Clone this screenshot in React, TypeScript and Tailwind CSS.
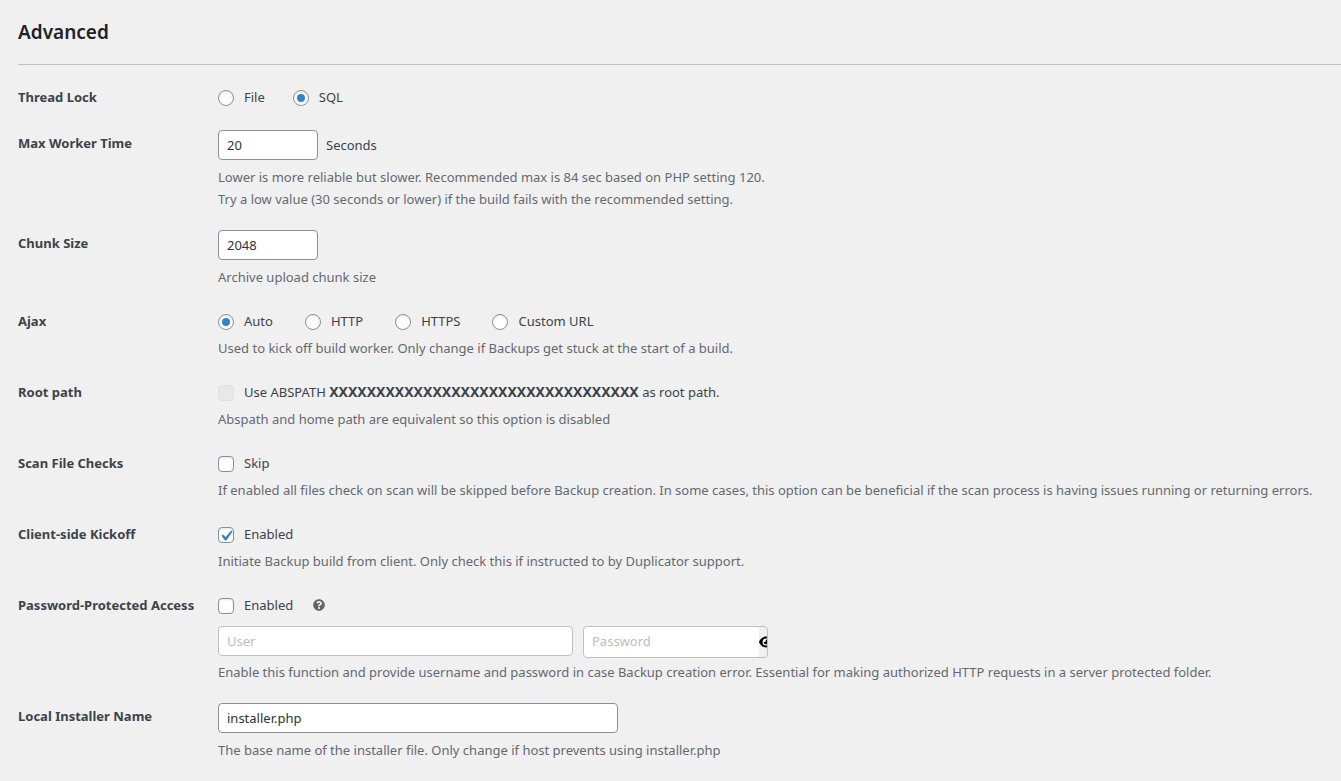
import React, { useState } from "react";
import { FaQuestionCircle } from "react-icons/fa";
import { FaEye } from "react-icons/fa6";

const inputClass =
  "h-[30px] rounded border border-[#8c8f94] bg-white px-2 text-[#2c3338] outline-none";

const labelClass = "w-[200px] shrink-0 font-bold leading-[26px]";

const Row = ({
  label,
  htmlFor,
  children,
}: {
  label: string;
  htmlFor?: string;
  children: React.ReactNode;
}) => (
  <div className="flex">
    {htmlFor ? (
      <label htmlFor={htmlFor} className={labelClass}>
        {label}
      </label>
    ) : (
      <span className={labelClass}>{label}</span>
    )}
    <div className="min-w-0 flex-1">{children}</div>
  </div>
);

const Description = ({ children }: { children: React.ReactNode }) => (
  <p className="pt-[3px] leading-[22px] text-[#646970]">{children}</p>
);

const Radio = ({
  name,
  label,
  checked,
  onChange,
}: {
  name: string;
  label: string;
  checked: boolean;
  onChange: () => void;
}) => (
  <label className="flex items-center gap-2.5 leading-[26px]">
    <input
      type="radio"
      name={name}
      checked={checked}
      onChange={onChange}
      className="mt-0.5 size-4 shrink-0 appearance-none rounded-full border border-[#8c8f94] bg-white p-[3px] shadow-[inset_0_1px_2px_rgba(0,0,0,0.1)] before:block before:size-2 before:rounded-full checked:before:bg-[#3582c4]"
    />
    {label}
  </label>
);

const Checkbox = ({
  defaultChecked,
  disabled,
  children,
}: {
  defaultChecked?: boolean;
  disabled?: boolean;
  children: React.ReactNode;
}) => (
  <label className="flex h-[26px] items-center gap-2.5 leading-[26px]">
    <span className="mt-0.5 grid size-4 shrink-0">
      <input
        type="checkbox"
        defaultChecked={defaultChecked}
        disabled={disabled}
        className="peer col-start-1 row-start-1 size-4 appearance-none rounded border border-[#8c8f94] bg-white shadow-[inset_0_1px_2px_rgba(0,0,0,0.1)] disabled:border-[#e0e0e0] disabled:bg-[#e8e8e8] disabled:shadow-none"
      />
      <svg
        viewBox="2.5 1.5 15 15"
        className="pointer-events-none invisible col-start-1 row-start-1 size-4 fill-[#3582c4] peer-checked:visible"
      >
        <path d="M14.83 4.89l1.34.94-5.81 8.38H9.02L5.78 9.67l1.34-1.25 2.57 2.4z" />
      </svg>
    </span>
    <span>{children}</span>
  </label>
);

const App = () => {
  const [lock, setLock] = useState("SQL");
  const [ajax, setAjax] = useState("Auto");

  return (
    <main className="min-h-screen bg-[#f0f0f0] pl-[18px] pb-4 font-['Noto_Sans','Open_Sans',sans-serif] text-[13px] text-[#3c434a]">
      <h2 className="pt-[18px] pb-[18px] text-[19px] font-semibold leading-7 text-[#1d2327]">
        Advanced
      </h2>
      <hr className="border-[#c0c0c0]" />
      <form className="mt-[19px] flex flex-col gap-5">
        <Row label="Thread Lock">
          <div className="flex h-[26px] items-center gap-7">
            {["File", "SQL"].map((item) => (
              <Radio
                key={item}
                name="lock"
                label={item}
                checked={lock === item}
                onChange={() => setLock(item)}
              />
            ))}
          </div>
        </Row>
        <Row label="Max Worker Time" htmlFor="worker-time">
          <div className="mb-[3px] flex items-center gap-2 leading-[30px]">
            <input
              id="worker-time"
              type="text"
              defaultValue="20"
              className={`w-[100px] ${inputClass}`}
            />
            <span>Seconds</span>
          </div>
          <Description>
            Lower is more reliable but slower. Recommended max is 84 sec based
            on PHP setting 120.
            <br />
            Try a low value (30 seconds or lower) if the build fails with the
            recommended setting.
          </Description>
        </Row>
        <Row label="Chunk Size" htmlFor="chunk-size">
          <input
            id="chunk-size"
            type="text"
            defaultValue="2048"
            className={`mb-[3px] block w-[100px] ${inputClass}`}
          />
          <Description>Archive upload chunk size</Description>
        </Row>
        <Row label="Ajax">
          <div className="flex h-[26px] items-center gap-8">
            {["Auto", "HTTP", "HTTPS", "Custom URL"].map((item) => (
              <Radio
                key={item}
                name="ajax"
                label={item}
                checked={ajax === item}
                onChange={() => setAjax(item)}
              />
            ))}
          </div>
          <Description>
            Used to kick off build worker. Only change if Backups get stuck at
            the start of a build.
          </Description>
        </Row>
        <Row label="Root path">
          <Checkbox disabled>
            Use ABSPATH{" "}
            <b className="text-[14px]">XXXXXXXXXXXXXXXXXXXXXXXXXXXXXXXXX</b> as
            root path.
          </Checkbox>
          <Description>
            Abspath and home path are equivalent so this option is disabled
          </Description>
        </Row>
        <Row label="Scan File Checks">
          <Checkbox>Skip</Checkbox>
          <Description>
            If enabled all files check on scan will be skipped before Backup
            creation. In some cases, this option can be beneficial if the scan
            process is having issues running or returning errors.
          </Description>
        </Row>
        <Row label="Client-side Kickoff">
          <Checkbox defaultChecked>Enabled</Checkbox>
          <Description>
            Initiate Backup build from client. Only check this if instructed to
            by Duplicator support.
          </Description>
        </Row>
        <Row label="Password-Protected Access">
          <div className="flex items-center gap-5">
            <Checkbox>Enabled</Checkbox>
            <FaQuestionCircle className="size-3 text-[#646464]" />
          </div>
          <div className="mt-2 flex items-start gap-2.5">
            <input
              type="text"
              aria-label="User"
              placeholder="User"
              className="h-[30px] w-[355px] rounded border border-[#c0c0c0] bg-white px-2 outline-none placeholder:text-[#bcbcbc]"
            />
            <div className="flex h-8 w-[185px] overflow-hidden rounded border border-[#c0c0c0]">
              <input
                type="password"
                aria-label="Password"
                placeholder="Password"
                className="w-[175px] shrink-0 rounded bg-white px-2 outline-none placeholder:text-[#bcbcbc]"
              />
              <button
                type="button"
                aria-label="Show password"
                className="shrink-0 text-black"
              >
                <FaEye className="size-3.5" />
              </button>
            </div>
          </div>
          <Description>
            Enable this function and provide username and password in case
            Backup creation error. Essential for making authorized HTTP requests
            in a server protected folder.
          </Description>
        </Row>
        <Row label="Local Installer Name" htmlFor="installer">
          <input
            id="installer"
            type="text"
            defaultValue="installer.php"
            className={`mb-[3px] block w-[400px] ${inputClass}`}
          />
          <Description>
            The base name of the installer file. Only change if host prevents
            using installer.php
          </Description>
        </Row>
      </form>
    </main>
  );
};

export default App;
